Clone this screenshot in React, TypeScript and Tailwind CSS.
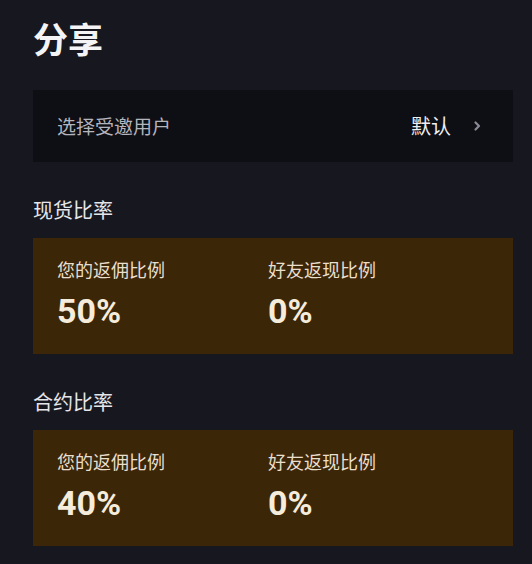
import React from "react";

type Rate = { title: string; mine: string; friend: string };

const rates: Rate[] = [
  { title: "现货比率", mine: "50%", friend: "0%" },
  { title: "合约比率", mine: "40%", friend: "0%" },
];

const cjk = "font-['Noto_Sans_CJK_SC',sans-serif]";

const RateCard = ({ rate }: { rate: Rate }) => (
  <div>
    <div className={`text-[20px] leading-[28px] text-[#e6e6ea] ${cjk}`}>
      {rate.title}
    </div>
    <div className="mt-[14px] h-[116px] bg-[#3b2608] flex pl-[24px] pt-[18px]">
      <div className="w-[211px]">
        <div className={`text-[18px] leading-[26px] text-[#eadfcd] ${cjk}`}>
          您的返佣比例
        </div>
        <div className="mt-[9px] text-[34px] leading-[40px] font-bold text-[#f6ecdc] font-['Roboto',sans-serif]">
          {rate.mine}
        </div>
      </div>
      <div>
        <div className={`text-[18px] leading-[26px] text-[#eadfcd] ${cjk}`}>
          好友返现比例
        </div>
        <div className="mt-[9px] text-[34px] leading-[40px] font-bold text-[#f6ecdc] font-['Roboto',sans-serif]">
          {rate.friend}
        </div>
      </div>
    </div>
  </div>
);

export default function App() {
  return (
    <div className="w-[532px] h-[564px] bg-[#17171f] pl-[33px] pr-[19px] overflow-hidden">
      <h1 className={`pt-[18px] text-[35px] leading-[40px] font-bold text-[#f4f4f6] ${cjk}`}>
        分享
      </h1>
      <div className="mt-[32px] h-[72px] bg-[#0e0e15] flex items-center justify-between pl-[24px] pr-[32px]">
        <span className={`text-[19px] text-[#b4b4bc] ${cjk}`}>选择受邀用户</span>
        <div className="flex items-center gap-[22px]">
          <span className={`text-[20px] text-[#f0f0f2] ${cjk}`}>默认</span>
          <svg width="8" height="12" viewBox="0 0 8 12" fill="none">
            <path d="M2.5 2.5l3.5 3.5-3.5 3.5" stroke="#8a8a94" strokeWidth="2.2" strokeLinecap="round" strokeLinejoin="round" />
          </svg>
        </div>
      </div>
      <div className="mt-[34px] flex flex-col gap-[34px]">
        {rates.map((r) => (
          <RateCard key={r.title} rate={r} />
        ))}
      </div>
    </div>
  );
}
